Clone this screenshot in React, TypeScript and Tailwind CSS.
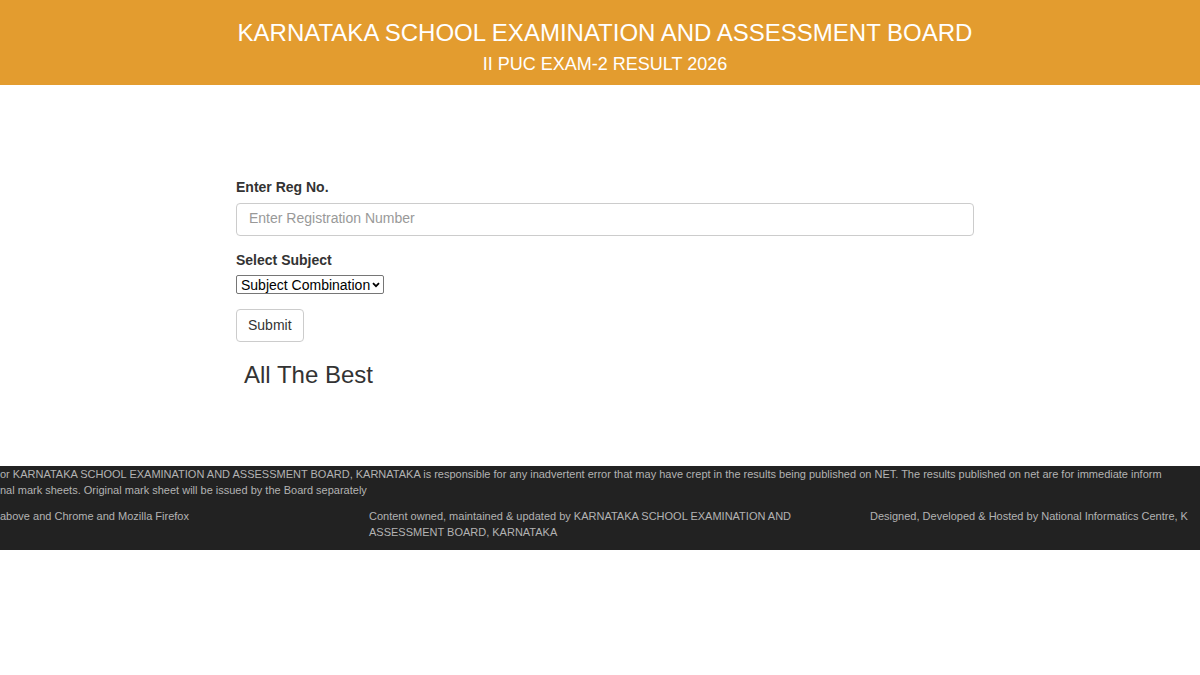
export default function App() {
  return (
    <div className="font-['Liberation_Sans',Arial,sans-serif] text-sm text-[#333333]">
      <header className="bg-[#e39c2f] pt-[17px] pb-[6px] pl-[10px] text-center text-white">
        <h1 className="text-2xl leading-8">KARNATAKA SCHOOL EXAMINATION AND ASSESSMENT BOARD</h1>
        <h2 className="text-lg leading-[30px]">II PUC EXAM-2 RESULT 2026</h2>
      </header>

      <main className="pt-[92px] pb-[75px] pl-[10px]">
        <form className="mx-auto max-w-[738px]" onSubmit={(e) => e.preventDefault()}>
          <label htmlFor="reg-no" className="block leading-5 font-bold">
            Enter Reg No.
          </label>
          <input
            id="reg-no"
            type="text"
            placeholder="Enter Registration Number"
            className="mt-[6px] block h-[33px] w-full rounded border border-[#cccccc] px-3 pb-1 placeholder:text-[#999999]"
          />
          <label htmlFor="subject" className="mt-[14px] block leading-5 font-bold">
            Select Subject
          </label>
          <div className="relative mt-[5px] w-[148px]">
            <select
              id="subject"
              className="block h-[19px] w-full appearance-none rounded-xs border border-[#767676] bg-white pl-1 leading-4 text-black"
            >
              <option>Subject Combination</option>
            </select>
            <svg
              viewBox="0 0 8 6"
              className="pointer-events-none absolute top-[7px] right-1 h-[6px] w-2"
              fill="none"
              stroke="#000000"
              strokeWidth="1.8"
              aria-hidden="true"
            >
              <path d="M1 1.2 4 4.2 7 1.2" />
            </svg>
          </div>
          <button
            type="submit"
            className="mt-[15px] block h-[33px] rounded border border-[#cccccc] bg-white px-[11px] pb-[2px]"
          >
            Submit
          </button>
          <h2 className="mt-[17px] pl-2 text-2xl leading-8">All The Best</h2>
        </form>
      </main>

      <footer className="overflow-hidden border-b-4 border-[#222222] bg-[#222222] text-[11px] leading-4 whitespace-nowrap text-[#b3b3b3]">
        <p>
          or KARNATAKA SCHOOL EXAMINATION AND ASSESSMENT BOARD, KARNATAKA is responsible for any inadvertent error that
          may have crept in the results being published on NET. The results published on net are for immediate inform
          <br />
          nal mark sheets. Original mark sheet will be issued by the Board separately
        </p>
        <div className="mt-[10px] flex pb-[6px]">
          <p className="w-[369px] shrink-0">above and Chrome and Mozilla Firefox</p>
          <p className="w-[501px] shrink-0">
            Content owned, maintained &amp; updated by KARNATAKA SCHOOL EXAMINATION AND
            <br />
            ASSESSMENT BOARD, KARNATAKA
          </p>
          <p>Designed, Developed &amp; Hosted by National Informatics Centre, K</p>
        </div>
      </footer>
    </div>
  );
}
